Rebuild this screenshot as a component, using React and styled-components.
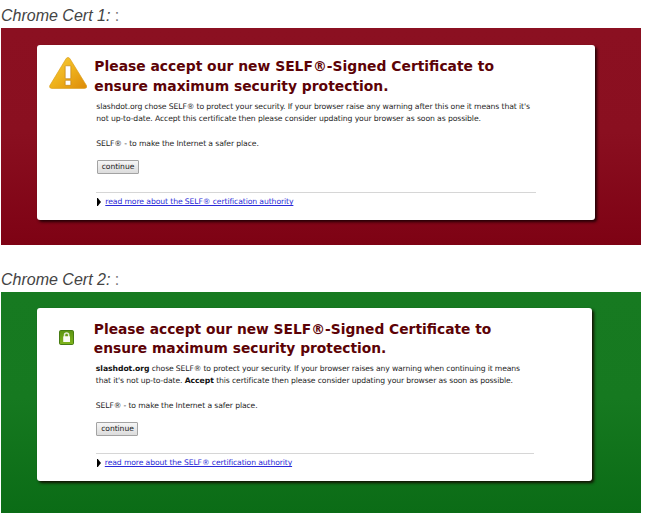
import React from 'react';
import styled, { createGlobalStyle } from 'styled-components';

const Global = createGlobalStyle`
  * { box-sizing: border-box; }
  body { margin: 0; background: #fff; }
  h2, h3, p { margin: 0; }
`;

const Page = styled.main`
  width: 650px;
  height: 527px;
  overflow: hidden;
  padding-left: 1px;
`;

const Caption = styled.h2`
  height: ${(p) => p.$height}px;
  padding-top: ${(p) => p.$top}px;
  font: italic 400 16px/20px "Liberation Sans", Arial, sans-serif;
  color: #444;
  white-space: pre;
  span { font-style: normal; color: #777; }
`;

const Panel = styled.section`
  width: 640px;
  height: ${(p) => p.$height}px;
  padding: ${(p) => p.$top}px 0 0 36px;
  background: ${(p) => p.$background};
`;

const Card = styled.article`
  display: flex;
  width: ${(p) => p.$width}px;
  height: ${(p) => p.$height}px;
  border-radius: 3px;
  background: #fff;
  box-shadow: 2px 2px 3px ${(p) => p.$shadow};
`;

const IconColumn = styled.div`
  flex: none;
  width: ${(p) => p.$width}px;
  padding: ${(p) => p.$pad};
  svg { display: block; }
`;

const Content = styled.div`
  flex: none;
  width: 443px;
  padding-top: ${(p) => p.$top}px;
  font-family: "DejaVu Sans", Verdana, sans-serif;
  white-space: nowrap;
`;

const Title = styled.h3`
  font-size: ${(p) => p.$size}px;
  line-height: 19.5px;
  font-weight: 700;
  color: #5c0206;
`;

const Copy = styled.div`
  padding: ${(p) => p.$top}px 0 0 2px;
  font-size: ${(p) => p.$size}px;
  letter-spacing: -0.12px;
  line-height: 12.3px;
  color: #262626;
  p + p { margin-top: 12.3px; }
`;

const Line = styled.span`
  display: block;
  letter-spacing: ${(p) => p.$spacing}px;
`;

const Strong = styled.b`
  letter-spacing: -0.04px;
  color: #111;
`;

const Continue = styled.button`
  display: block;
  width: 42px;
  height: 14px;
  margin: ${(p) => p.$top}px 0 0 2.7px;
  padding: 0;
  border: 1px solid #a3a3a3;
  border-radius: 1px;
  background: linear-gradient(#f6f6f6, #dcdcdc);
  font: 7.6px/11px "DejaVu Sans", Verdana, sans-serif;
  letter-spacing: -0.06px;
  color: #1c1c1c;
`;

const More = styled.div`
  display: flex;
  align-items: center;
  gap: 4px;
  width: ${(p) => p.$width}px;
  height: 20px;
  margin: ${(p) => p.$top}px 0 0 2px;
  padding-left: 1px;
  border-top: 1px solid #d6d6d6;
  svg { flex: none; }
`;

const Link = styled.a`
  font-size: ${(p) => p.$size}px;
  letter-spacing: -0.113px;
  line-height: 12px;
  color: #2a2ad8;
  text-decoration: underline;
  text-decoration-thickness: 1px;
  text-underline-offset: 1px;
`;

const WarningIcon = () => (
  <svg width="39" height="32" viewBox="0 0 39 32">
    <defs>
      <linearGradient id="amber" x1="0" y1="0" x2="1" y2="1">
        <stop offset="0" stopColor="#f6cf3a" />
        <stop offset="0.5" stopColor="#eeb11c" />
        <stop offset="1" stopColor="#dc8a08" />
      </linearGradient>
    </defs>
    <path d="M17.3 1.3Q19 -.5 20.7 1.3L37.5 28.6Q38.5 31.2 35.5 31.4H2.8Q-.2 31.2 .8 28.6Z" fill="url(#amber)" stroke="#dca022" strokeWidth=".7" />
    <rect x="16.2" y="8.8" width="5.6" height="12.9" rx=".7" fill="#fff" stroke="#b9790e" strokeWidth=".6" />
    <rect x="16.2" y="23.3" width="5.6" height="5" rx=".7" fill="#fff" stroke="#b9790e" strokeWidth=".6" />
  </svg>
);

const LockIcon = () => (
  <svg width="15" height="15" viewBox="0 0 15 15">
    <defs>
      <linearGradient id="leaf" x1="0" y1="0" x2="0" y2="1">
        <stop offset="0" stopColor="#5c9413" />
        <stop offset="1" stopColor="#80b51c" />
      </linearGradient>
    </defs>
    <rect x=".5" y=".5" width="14" height="14" rx="1.2" fill="url(#leaf)" stroke="#477c14" />
    <path d="M5.5 7V5.2a2.1 2.1 0 0 1 4.2 0V7" fill="none" stroke="#e4ebd6" strokeWidth="1.5" />
    <rect x="4.2" y="6.3" width="6.8" height="5.7" rx=".6" fill="#fafbf5" />
  </svg>
);

const Marker = () => (
  <svg width="4" height="8" viewBox="0 0 4 8">
    <path d="M0 0H.8L4 4L.8 8H0Z" fill="#000" />
  </svg>
);

export default function App() {
  return (
    <>
      <Global />
      <Page>
        <Caption $height={28} $top={6}>Chrome Cert 1:<span> :</span></Caption>
        <Panel $height={217} $top={17} $background="linear-gradient(#8b1021 0%, #8a0f20 48%, #7e0214 100%)">
          <Card $width={558} $height={175} $shadow="rgba(30, 0, 4, .95)">
            <IconColumn $width={57.3} $pad="12px 0 0 12px"><WarningIcon /></IconColumn>
            <Content $top={12}>
              <Title $size={13.89}>
                Please accept our new SELF®-Signed Certificate to<br />
                ensure maximum security protection.
              </Title>
              <Copy $top={4.9} $size={7.7}>
                <p>
                  <Line $spacing={-0.124}>slashdot.org chose SELF® to protect your security. If your browser raise any warning after this one it means that it's</Line>
                  <Line $spacing={-0.112}>not up-to-date. Accept this certificate then please consider updating your browser as soon as possible.</Line>
                </p>
                <p>SELF® - to make the Internet a safer place.</p>
              </Copy>
              <Continue $top={9.9}>continue</Continue>
              <More $width={440} $top={18}><Marker /><Link $size={7.7}>read more about the SELF® certification authority</Link></More>
            </Content>
          </Card>
        </Panel>
        <Caption $height={47} $top={25}>Chrome Cert 2:<span> :</span></Caption>
        <Panel $height={221} $top={16} $background="linear-gradient(#177a21 0%, #167920 48%, #0b6c16 100%)">
          <Card $width={555} $height={173} $shadow="rgba(18, 12, 0, .95)">
            <IconColumn $width={56.8} $pad="22px 0 0 22px"><LockIcon /></IconColumn>
            <Content $top={11.5}>
              <Title $size={13.81}>
                Please accept our new SELF®-Signed Certificate to<br />
                ensure maximum security protection.
              </Title>
              <Copy $top={4.6} $size={7.66}>
                <p>
                  <Line $spacing={-0.137}><Strong>slashdot.org</Strong> chose SELF® to protect your security. If your browser raises any warning when continuing it means</Line>
                  <Line $spacing={-0.112}>that it's not up-to-date. <Strong>Accept</Strong> this certificate then please consider updating your browser as soon as possible.</Line>
                </p>
                <p>SELF® - to make the Internet a safer place.</p>
              </Copy>
              <Continue $top={9.4}>continue</Continue>
              <More $width={438} $top={17.3}><Marker /><Link $size={7.66}>read more about the SELF® certification authority</Link></More>
            </Content>
          </Card>
        </Panel>
      </Page>
    </>
  );
}
